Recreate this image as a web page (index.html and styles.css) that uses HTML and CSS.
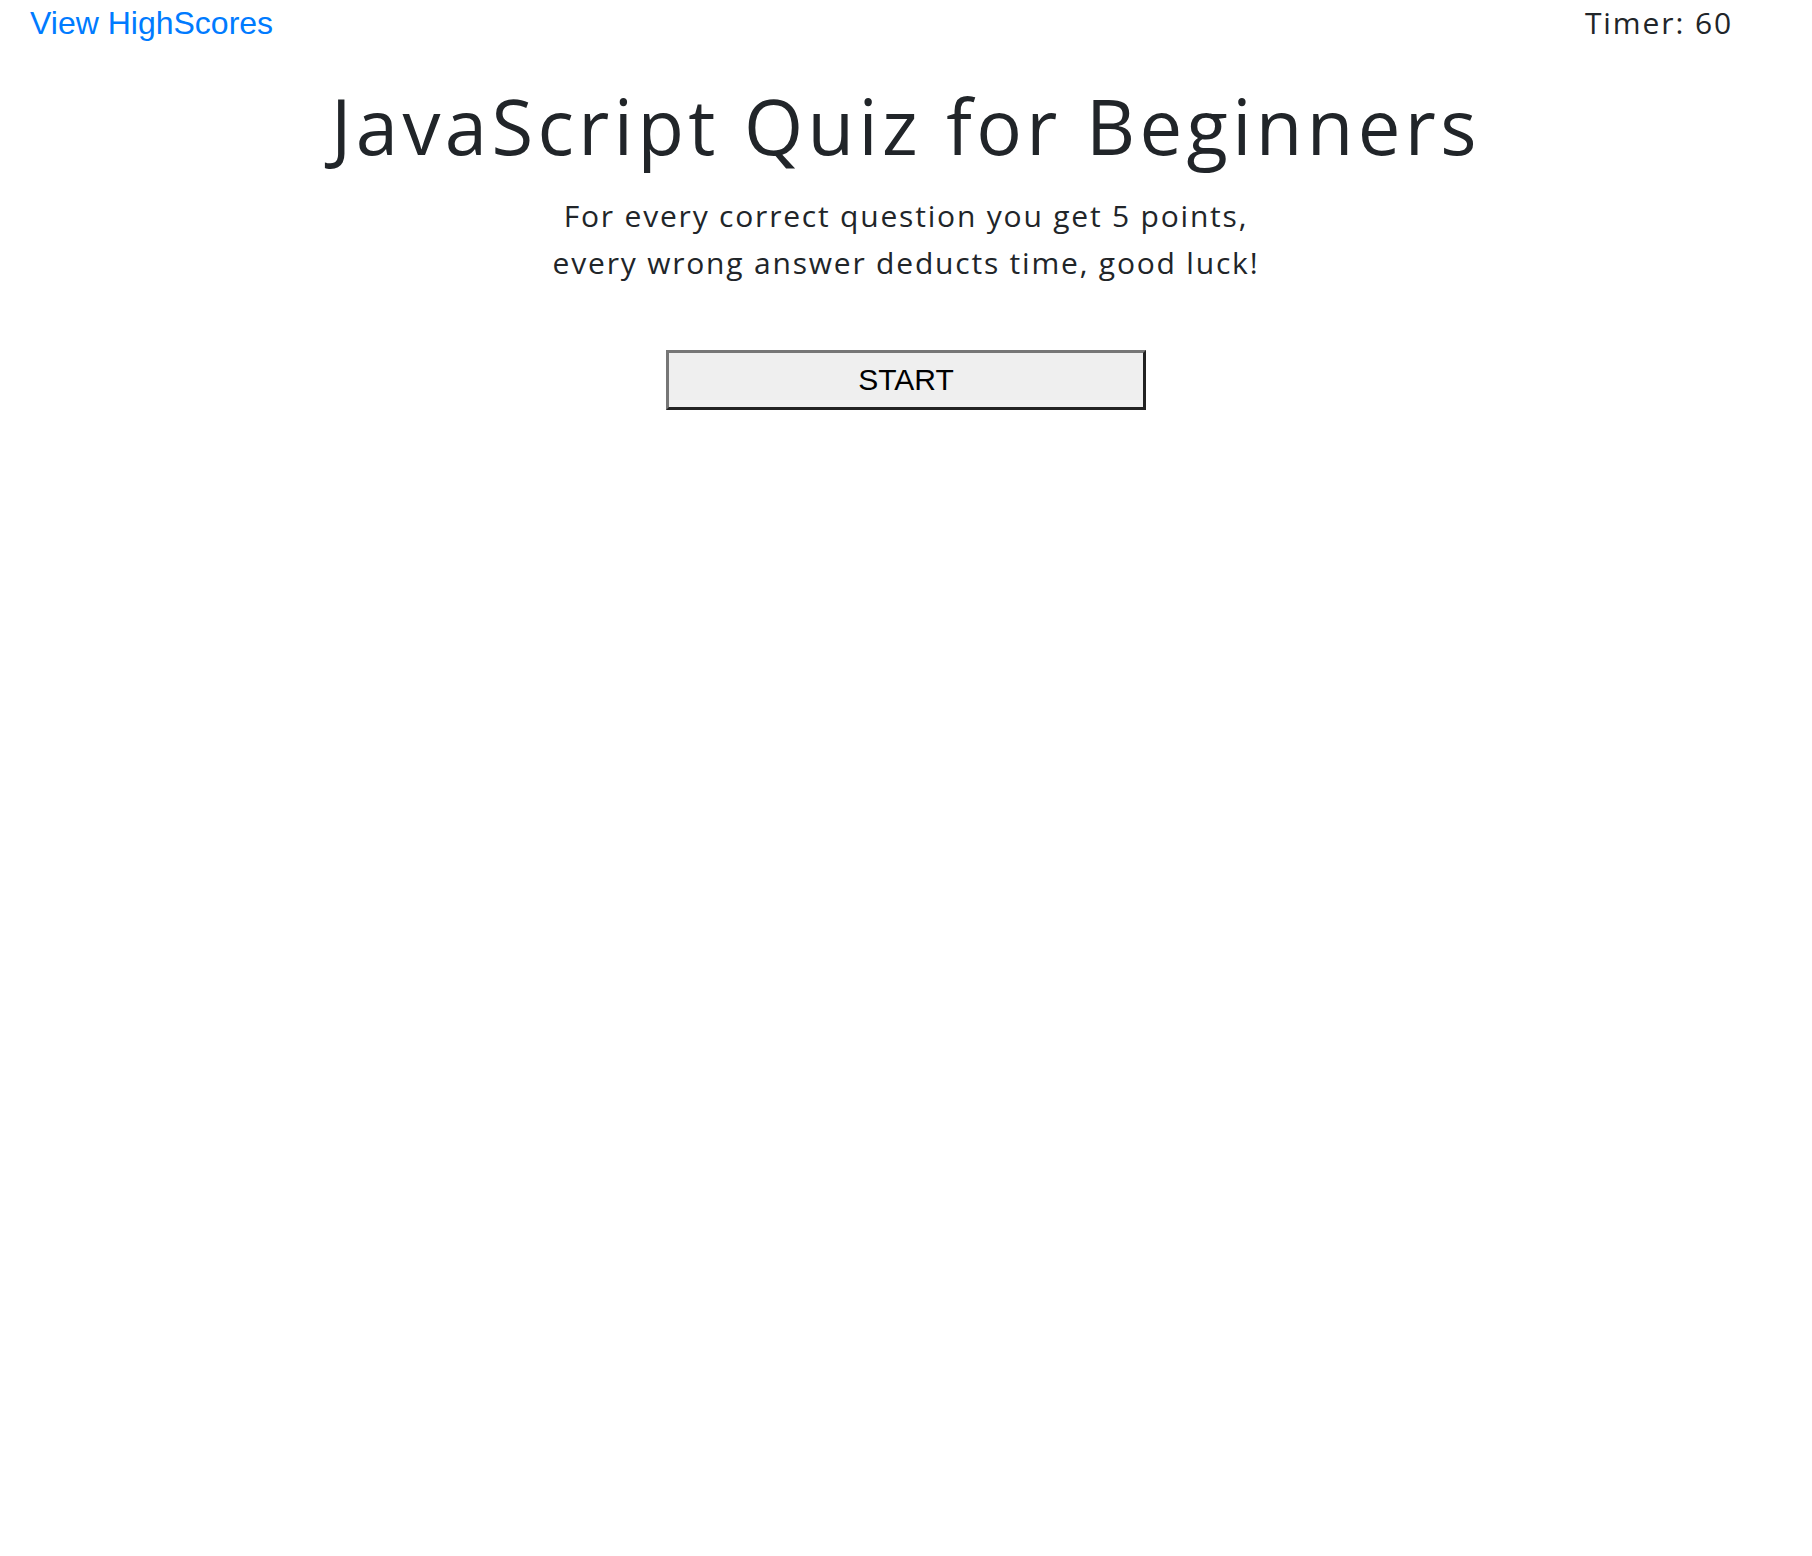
FILE: index.html
```html
<!DOCTYPE html>
<html lang="en">
<head>
<meta charset="utf-8">
<title>JavaScript Quiz for Beginners</title>
<link rel="stylesheet" href="styles.css">
</head>
<body>
<header class="topbar">
  <a class="highscores" href="#">View HighScores</a>
  <div class="timer">Timer: <span>60</span></div>
</header>
<main class="intro">
  <h1 class="title">JavaScript Quiz for Beginners</h1>
  <p class="lead">For every correct question you get 5 points,<br>every wrong answer deducts time, good luck!</p>
  <button class="start" type="button">START</button>
</main>
</body>
</html>
```
FILE: styles.css
```css
html, body {
  margin: 0;
  padding: 0;
  background: #ffffff;
}
body {
  font-family: "Open Sans", "Liberation Sans", sans-serif;
  color: #212529;
}
.topbar {
  display: flex;
  justify-content: space-between;
  align-items: flex-start;
  padding: 0 79px 0 30px;
  height: 46px;
}
.highscores {
  font-family: "Liberation Sans", Arial, sans-serif;
  font-size: 32px;
  line-height: 46px;
  color: #007bff;
  text-decoration: none;
}
.timer {
  font-size: 30px;
  line-height: 46px;
  letter-spacing: 1.9px;
}
.intro {
  display: flex;
  flex-direction: column;
  align-items: center;
}
.title {
  margin: 32px 0 0;
  font-size: 76px;
  font-weight: 400;
  line-height: 96px;
  letter-spacing: 4.4px;
}
.lead {
  margin: 18px 0 0;
  text-align: center;
  font-size: 30px;
  line-height: 47px;
  letter-spacing: 1.8px;
}
.start {
  margin-top: 64px;
  width: 480px;
  height: 60px;
  background: #efefef;
  border: 3px solid;
  border-color: #767676 #222222 #222222 #767676;
  font-family: "Liberation Sans", Arial, sans-serif;
  font-size: 30px;
  color: #000;
  padding: 0;
}
```
